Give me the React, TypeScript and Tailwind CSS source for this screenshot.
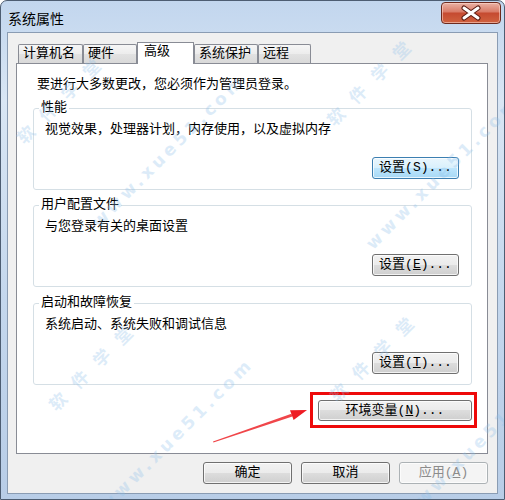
import type { ReactNode } from 'react';

const tabs = [
  { label: '计算机名', w: 'w-[65px]' },
  { label: '硬件', w: 'w-[54px]' },
  { label: '高级', w: 'w-[57px]', active: true },
  { label: '系统保护', w: 'w-[64px]' },
  { label: '远程', w: 'w-[53px]' },
];

const groups = [
  { legend: '性能', text: '视觉效果，处理器计划，内存使用，以及虚拟内存', key: 'S', hot: true, mt: 'mt-[7px]' },
  { legend: '用户配置文件', text: '与您登录有关的桌面设置', key: 'E', mt: 'mt-[7px]' },
  { legend: '启动和故障恢复', text: '系统启动、系统失败和调试信息', key: 'T', mt: 'mt-[8px]' },
];

// faint diagonal site watermark
const marks = [
  { text: '软 件 学 堂', pos: 'left-[60px] top-[100px]' },
  { text: 'www.xue51.com', pos: 'left-[168px] top-[150px]' },
  { text: '软 件 学 堂', pos: 'left-[92px] top-[367px]' },
  { text: 'www.xue51.com', pos: 'left-[176px] top-[434px]' },
  { text: '软 件 学 堂', pos: 'left-[373px] top-[358px]' },
  { text: 'www.xue51.com', pos: 'left-[442px] top-[172px]' },
  { text: 'www.xue51.com', pos: 'left-[478px] top-[442px]' },
  { text: '软 件 学 堂', pos: 'left-[370px] top-[82px]' },
];

function Button({ children, className = '', hot, disabled }: { children: ReactNode; className?: string; hot?: boolean; disabled?: boolean }) {
  const skin = disabled
    ? 'border-[#adb2b5] bg-[#f4f4f4] text-[#8d8d8d]'
    : hot
      ? 'border-[#3c7fb1] bg-[linear-gradient(#eaf6fd,#d9f0fc_50%,#bee6fd_50%,#a7d9f5)] text-black'
      : 'border-[#707070] bg-[linear-gradient(#f2f2f2,#ebebeb_50%,#dddddd_50%,#cfcfcf)] text-black';
  return (
    <div
      className={`flex items-center justify-center rounded-[3px] border shadow-[inset_0_0_0_1px_rgba(255,255,255,0.75)] text-[13px] leading-[16px] ${skin} ${className}`}
    >
      {children}
    </div>
  );
}

export default function App() {
  return (
    <div className="relative w-[505px] h-[500px] overflow-hidden rounded-t-[7px] border border-[#4d5d72] bg-[linear-gradient(180deg,#c2d6ee,#d9e6f4_20%,#c4d7ed_60%,#b8cde7)] font-['Liberation_Mono','Noto_Sans_CJK_SC',monospace] text-black">
      {/* title bar */}
      <div className="flex h-[31px] items-start">
        <span className="ml-[7px] mt-[9px] font-['Noto_Sans_CJK_SC',sans-serif] text-[14px] leading-[16px]">系统属性</span>
        <div className="ml-auto mr-[3px] mt-[1px] h-[22px] w-[60px] rounded-[4px] border border-[#6d2a1e] bg-[linear-gradient(#eab1a4,#d97a66_45%,#c54a30_50%,#d0623f)] shadow-[inset_0_0_0_1px_rgba(255,220,210,0.55)]">
          <svg width="58" height="20" viewBox="0 0 58 20">
            <path d="M22 5 L36 15 M36 5 L22 15" stroke="#5a1a10" strokeWidth="5" strokeLinecap="round" />
            <path d="M22 5 L36 15 M36 5 L22 15" stroke="#ffffff" strokeWidth="3" strokeLinecap="round" />
          </svg>
        </div>
      </div>

      {/* client area */}
      <div className="mx-[6px] h-[462px] border border-[#8a9cb3] bg-[#f0f0f0] pl-[8px] pt-[9px] pr-[9px]">
        <div className="ml-[2px] flex items-end">
          {tabs.map((t) =>
            t.active ? (
              <div
                key={t.label}
                className={`${t.w} relative z-10 -mb-px h-[22px] border border-b-0 border-[#898c95] bg-white pl-[6px] pt-[1px] text-[13px] leading-[16px]`}
              >
                {t.label}
              </div>
            ) : (
              <div
                key={t.label}
                className={`${t.w} h-[19px] rounded-t-[2px] border border-b-0 border-[#898c95] bg-[linear-gradient(#f6f6f6,#ececec_50%,#e2e2e2_50%,#d9d9d9)] pl-[4px] pt-[1px] text-[13px] leading-[16px]`}
              >
                {t.label}
              </div>
            ),
          )}
        </div>

        <div className="flex h-[391px] w-[472px] flex-col border border-[#898c95] bg-white pl-[16px] pr-[15px] pt-[13px]">
          <p className="ml-[4px] text-[13px] leading-[16px]">要进行大多数更改，您必须作为管理员登录。</p>

          {groups.map((g) => (
            <fieldset key={g.legend} className={`${g.mt} rounded-[3px] border border-[#d5dfe5]`}>
              <legend className="ml-[5px] px-[2px] text-[13px] leading-[16px]">{g.legend}</legend>
              <div className="flex h-[73px] flex-col pb-[10px] pl-[11px] pr-[12px] pt-[6px]">
                <p className="text-[13px] leading-[16px]">{g.text}</p>
                <Button hot={g.hot} className="mt-auto h-[22px] w-[87px] self-end">
                  设置({g.hot ? g.key : <u>{g.key}</u>})...
                </Button>
              </div>
            </fieldset>
          ))}

          <div className="mr-[-5px] mt-[7px] self-end border-[3px] border-[#ee0a0a] pb-[4px] pl-[5px] pr-[2px] pt-[5px]">
            <Button className="h-[21px] w-[154px]">
              环境变量(<u>N</u>)...
            </Button>
          </div>
        </div>

        <div className="mt-[8px] flex justify-end gap-[9px]">
          <Button className="h-[22px] w-[89px]">确定</Button>
          <Button className="h-[22px] w-[89px]">取消</Button>
          <Button disabled className="h-[22px] w-[89px]">
            应用(<u>A</u>)
          </Button>
        </div>
      </div>

      {/* red annotation arrow */}
      <svg className="pointer-events-none absolute left-0 top-0" width="505" height="500" viewBox="0 0 505 500">
        <polygon points="212,440.5 290.4,412.8 291.4,415.6 212.4,441.6" fill="#f0464a" />
        <polygon points="306,409 289,409.2 292.6,419" fill="#ee1c24" />
      </svg>

      {marks.map((m, i) => (
        <span
          key={i}
          className={`pointer-events-none absolute ${m.pos} -translate-x-1/2 -translate-y-1/2 -rotate-45 whitespace-nowrap font-['DejaVu_Sans','Noto_Sans_CJK_SC',sans-serif] text-[17px] font-bold tracking-[4px] text-[#8fc0ea] opacity-30`}
        >
          {m.text}
        </span>
      ))}
    </div>
  );
}
